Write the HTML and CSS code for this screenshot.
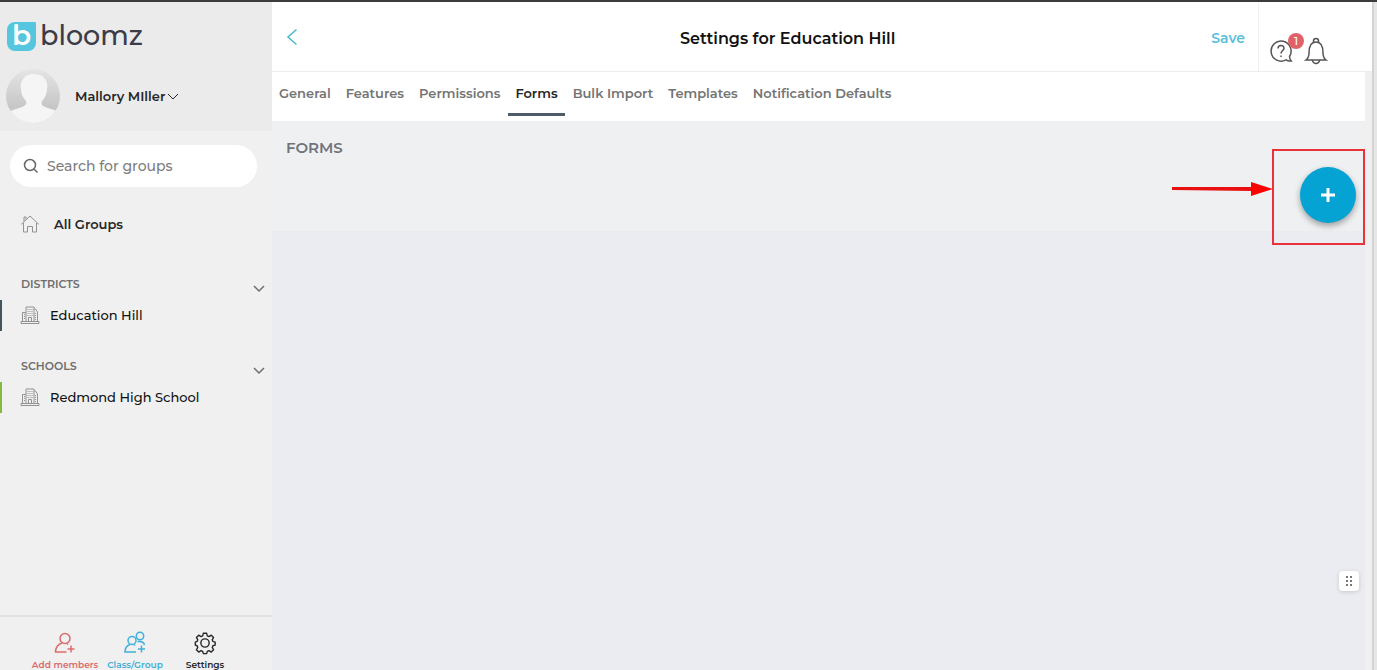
FILE: index.html
```html
<!DOCTYPE html>
<html lang="en">
<head>
  <meta charset="UTF-8" />
  <meta name="viewport" content="width=device-width, initial-scale=1.0"/>
  <title>Settings for Education Hill - Bloomz</title>
  <link rel="stylesheet" href="styles.css">
</head>
<body>

  <!-- shared icons -->
  <svg class="sprite" aria-hidden="true">
    <symbol id="chevron" viewBox="0 0 12 12">
      <path d="M1 4l5 5 5-5"/>
    </symbol>
    <symbol id="building" viewBox="0 0 20 20">
      <path d="M1 16.500h18v2H1zM2.500 16V7.500H6M6 16V2h8v14M14 4h1.500l2 3v9M8.500 16v-3.500h3V16"/>
      <path d="M4 9.500h1M4 11.500h1M4 13.500h1M7.500 4.500h5M7.500 6.500h5M7.500 8.500h5M7.500 10.500h5M15 8.500h1.500M15 10.500h1.500M15 12.500h1.500M15 14.500h1.500" stroke-dasharray="1 1"/>
    </symbol>
  </svg>

  <aside class="sidebar">
    <div class="profile">
      <a class="logo" href="#">
        <span class="logo-mark">b</span>
        <span class="logo-name">bloomz</span>
      </a>
      <div class="user">
        <svg class="avatar" viewBox="0 0 56 56">
          <defs>
            <linearGradient id="avatarBg" x1="0" y1="0" x2="0" y2="1">
              <stop offset="0" stop-color="#e6e6e6"/>
              <stop offset="0.7" stop-color="#c6c6c6"/>
              <stop offset="1" stop-color="#dedede"/>
            </linearGradient>
            <clipPath id="avatarClip"><circle cx="28" cy="28" r="27"/></clipPath>
          </defs>
          <g clip-path="url(#avatarClip)">
            <rect width="56" height="56" fill="url(#avatarBg)"/>
            <path d="M28 6c-4 0-7 1-9 4-3 3-4 7-3 11 0 5 2 9 5 12 1 3-1 5-4 6-5 2-10 3-13 5v14h50V44c-4-2-9-3-14-5-3-1-4-3-3-6 3-3 5-8 5-12 1-4 0-8-3-11-2-3-6-4-11-4z" fill="#f5f5f5"/>
          </g>
        </svg>
        <button class="user-name">Mallory MIller
          <svg class="icon-sm" viewBox="0 0 12 12"><use href="#chevron"/></svg>
        </button>
      </div>
    </div>

    <div class="groups">
      <label class="search">
        <svg viewBox="0 0 16 16"><circle cx="7" cy="7" r="5.500"/><path d="M11 11l3.500 3.500"/></svg>
        <input type="text" placeholder="Search for groups" aria-label="Search for groups">
      </label>

      <a class="all-groups" href="#">
        <svg viewBox="0 0 20 20"><path d="M1 10.500L10 2l9 8.500M4 7.500V3h2v2.500M3.500 9v9h4v-5.500h5V18h4V9"/></svg>
        All Groups
      </a>

      <section class="group">
        <button class="group-title">Districts
          <svg class="icon-sm" viewBox="0 0 12 12"><use href="#chevron"/></svg>
        </button>
        <a class="group-link district" href="#">
          <svg viewBox="0 0 20 20"><use href="#building"/></svg>
          Education Hill
        </a>
      </section>

      <section class="group">
        <button class="group-title">Schools
          <svg class="icon-sm" viewBox="0 0 12 12"><use href="#chevron"/></svg>
        </button>
        <a class="group-link school" href="#">
          <svg viewBox="0 0 20 20"><use href="#building"/></svg>
          Redmond High School
        </a>
      </section>
    </div>

    <footer class="actions">
      <button class="action add">
        <svg viewBox="0 0 24 24"><circle cx="12" cy="7.500" r="5"/><path d="M9 12c-4 1.500-6.500 4.500-6.500 9h11M15 13.500l-1-1M18 14.500v7M14.500 18h7"/></svg>
        Add members
      </button>
      <button class="action class">
        <svg viewBox="0 0 24 24"><circle cx="9" cy="9.500" r="4"/><circle cx="17" cy="5" r="3.700"/><path d="M7 13.500c-3 1-5 4-5 7.500h11M12 14.500l-1-1M14.500 10.500h2c3 0 4.500 1.500 5 3.500M18.500 14.500v7M15 18h7"/></svg>
        Class/Group
      </button>
      <button class="action settings">
        <svg viewBox="-1 -1 26 26"><circle cx="12" cy="12" r="4.500"/><path d="M10.200 1.500h3.600l.7 2.700 1.800.8 2.500-1.500 2.500 2.500-1.500 2.500.8 1.800 2.400.7v3.300l-2.400.7-.8 1.800 1.500 2.500-2.500 2.500-2.500-1.500-1.800.8-.7 2.400h-3.600l-.7-2.400-1.800-.8-2.500 1.500-2.500-2.500 1.500-2.500-.8-1.800L1.500 14.300V11l1.900-.7.8-1.800L2.700 6l2.500-2.500L7.700 5l1.800-.8z" stroke-linejoin="round"/></svg>
        Settings
      </button>
    </footer>
  </aside>

  <main class="main">
    <header class="topbar">
      <button class="back" aria-label="Back">
        <svg viewBox="0 0 12 18"><path d="M10.500 1.500L2 9l8.500 7.500"/></svg>
      </button>
      <h1>Settings for Education Hill</h1>
      <button class="save">Save</button>
      <div class="tools">
        <button class="tool" aria-label="Help">
          <svg viewBox="0 0 24 28"><path d="M20.500 19.500A10 10 0 1 0 17 22.800c1.500 1.200 3.500 1.500 5.300 1.200-1.300-1.200-1.800-2.700-1.800-4.500z"/><path d="M9 11.500c0-4 6-4 6-.3 0 2.300-3 2.300-3 5.300M12 18.500V20"/></svg>
          <span class="badge">1</span>
        </button>
        <button class="tool" aria-label="Notifications">
          <svg viewBox="0 0 24 28"><path d="M9.500 5.500V4a2.500 2.500 0 0 1 5 0v1.500M2 23h20c-2-1.500-3-3.500-3-7 0-6-1-11-7-11S5 10 5 16c0 3.500-1 5.500-3 7zM8.500 23a3.500 3.500 0 0 0 7 0"/></svg>
        </button>
      </div>
    </header>

    <div class="page">
      <nav class="tabs">
        <a href="#">General</a>
        <a href="#">Features</a>
        <a href="#">Permissions</a>
        <a class="active" href="#">Forms</a>
        <a href="#">Bulk Import</a>
        <a href="#">Templates</a>
        <a href="#">Notification Defaults</a>
      </nav>

      <section class="forms-head">
        <h2>Forms</h2>
        <svg class="arrow" viewBox="0 0 102 16">
          <path d="M0 6h79v4L0 9z" fill="#e81010"/>
          <path d="M79 1l22 7-22 7z" fill="#fe0000"/>
        </svg>
        <div class="highlight">
          <button class="fab" aria-label="Add form">
            <svg viewBox="0 0 14 14"><path d="M7 0v14M0 7h14"/></svg>
          </button>
        </div>
      </section>

      <div class="forms-list">
        <button class="grip" aria-label="Open widget">
          <svg viewBox="0 0 8 10"><path d="M1 1h2M5 1h2M1 5h2M5 5h2M1 9h2M5 9h2"/></svg>
        </button>
      </div>
    </div>
  </main>

</body>
</html>
```
FILE: styles.css
```css
* {
  box-sizing: border-box;
}

body {
  font-family: Montserrat, 'Inter', sans-serif;
  font-size: 13px;
  font-weight: 600;
  line-height: 20px;
  color: #262626;
  background: #e6e6e7;
  margin: 0;
  padding-right: 3px;
  height: 100vh;
  display: flex;
  overflow: hidden;
  border-top: 2px solid #3d3b3c;
}

h1, h2 {
  margin: 0;
  font-weight: 600;
}

a {
  color: inherit;
  text-decoration: none;
}

button {
  padding: 0;
  border: none;
  background: none;
  color: inherit;
  font: inherit;
  cursor: pointer;
}

svg {
  display: block;
  flex: none;
  fill: none;
  stroke: currentColor;
}

.sprite {
  position: absolute;
  width: 0;
  height: 0;
}

.icon-sm {
  width: 12px;
  height: 12px;
}

/* sidebar */
.sidebar {
  width: 272px;
  flex: none;
  display: flex;
  flex-direction: column;
  background: #f0f0f0;
}

.profile {
  height: 129px;
  padding: 18px 5px 0;
  background: #ebebeb;
}

.logo {
  display: flex;
  align-items: center;
  gap: 4px;
  height: 32px;
  padding-left: 2px;
}

.logo-mark {
  width: 29px;
  height: 29px;
  border-radius: 8px 1px 8px 8px;
  background: #56c5de;
  color: white;
  font-size: 28px;
  line-height: 27px;
  text-align: center;
}

.logo-name {
  font-size: 27px;
  font-weight: 500;
  line-height: 32px;
  color: #3c3c48;
}

.user {
  display: flex;
  align-items: center;
  gap: 14px;
  margin-top: 16px;
}

.avatar {
  width: 56px;
  height: 56px;
  stroke: none;
}

.user-name {
  display: flex;
  align-items: center;
  gap: 2px;
}

.groups {
  flex: 1;
  padding-top: 14px;
}

.search {
  display: flex;
  align-items: center;
  gap: 8px;
  height: 42px;
  margin: 0 15px 0 10px;
  padding: 0 13px;
  border-radius: 21px;
  background: white;
}

.search svg {
  width: 16px;
  height: 16px;
  color: #666;
  stroke-width: 1.5;
}

.search input {
  flex: 1;
  min-width: 0;
  padding: 0;
  border: none;
  outline: none;
  background: none;
  font: inherit;
  font-size: 14px;
  font-weight: 500;
}

.search input::placeholder {
  color: #7d7d7d;
}

.all-groups {
  display: flex;
  align-items: center;
  gap: 14px;
  margin-top: 27px;
  padding-left: 20px;
}

.all-groups svg, .group-link svg {
  width: 20px;
  height: 20px;
  color: #929292;
}

.group {
  margin-top: 40px;
}

.group + .group {
  margin-top: 25px;
}

.group-title {
  display: flex;
  justify-content: space-between;
  align-items: flex-end;
  width: 100%;
  padding: 0 7px 0 21px;
  font-size: 11px;
  color: #6e6e6e;
  text-transform: uppercase;
}

.group-title svg {
  stroke-width: 1.5;
}

.group-link {
  display: flex;
  align-items: center;
  gap: 10px;
  height: 31px;
  margin-top: 6px;
  padding: 0 0 2px 18px;
  border-left: 2px solid;
  font-weight: 500;
  color: #111;
}

.district {
  border-color: #455560;
}

.school {
  border-color: #83bd3f;
}

.actions {
  display: flex;
  height: 55px;
  padding: 14px 0 0 30px;
  border-top: 2px solid #e2e2e2;
}

.action {
  display: flex;
  flex-direction: column;
  align-items: center;
  width: 70px;
  font-size: 9px;
  line-height: 20px;
  white-space: nowrap;
}

.action svg {
  width: 24px;
  height: 24px;
  stroke-width: 1.5;
}

.add {
  color: #dd6b6b;
}

.class {
  color: #3fb0d8;
}

/* main area */
.main {
  flex: 1;
  min-width: 0;
  display: flex;
  flex-direction: column;
  background: #f0f0f0;
  border-right: 2px solid #d4d4d4;
}

.topbar {
  display: flex;
  height: 70px;
  background: white;
  border-bottom: 1px solid #ececec;
}

.back {
  padding-left: 14px;
  color: #45b9cc;
}

.back svg {
  width: 12px;
  height: 18px;
  stroke-width: 1.5;
}

.topbar h1 {
  flex: 1;
  padding-left: 66px;
  font-size: 16px;
  line-height: 74px;
  text-align: center;
  color: #111;
}

.save {
  padding: 2px 13px 0 0;
  font-size: 14px;
  color: #5bbfdd;
}

.tools {
  display: flex;
  align-items: flex-end;
  gap: 11px;
  width: 114px;
  padding: 0 0 6px 10px;
  border-left: 1px solid #f0f0f0;
  color: #555;
}

.tool {
  position: relative;
}

.tool svg {
  width: 24px;
  height: 28px;
  stroke-width: 1.5;
}

.badge {
  position: absolute;
  top: -4px;
  right: -11px;
  width: 16px;
  height: 16px;
  border-radius: 50%;
  background: #e06268;
  color: white;
  font-size: 11px;
  font-weight: 500;
  line-height: 16px;
}

.page {
  flex: 1;
  display: flex;
  flex-direction: column;
  margin-right: 7px;
}

.tabs {
  display: flex;
  gap: 1px;
  height: 49px;
  background: white;
  color: #747474;
}

.tabs a {
  height: 44px;
  padding: 0 7px;
  line-height: 42px;
}

.tabs .active {
  color: #262626;
  border-bottom: 3px solid #4d5c68;
}

.forms-head {
  position: relative;
  height: 110px;
  padding: 17px 14px;
  background: #eff0f2;
}

.forms-head h2 {
  font-size: 15px;
  color: #70737a;
  text-transform: uppercase;
}

.arrow {
  position: absolute;
  top: 60px;
  right: 91px;
  width: 102px;
  height: 16px;
  stroke: none;
}

.highlight {
  position: absolute;
  top: 28px;
  right: 0;
  width: 93px;
  height: 96px;
  padding: 16px 0 0 26px;
  border: 2px solid #e8323c;
}

.fab {
  display: flex;
  align-items: center;
  justify-content: center;
  width: 56px;
  height: 56px;
  border-radius: 50%;
  background: #05a3d3;
  color: white;
  box-shadow: 0 3px 6px rgba(0,0,0,0.35);
}

.fab svg {
  width: 14px;
  height: 14px;
  stroke-width: 3;
}

.forms-list {
  flex: 1;
  display: flex;
  justify-content: flex-end;
  align-items: flex-end;
  padding: 0 6px 79px;
  background: #ebecf1;
}

.grip {
  display: flex;
  align-items: center;
  justify-content: center;
  width: 20px;
  height: 20px;
  border-radius: 4px;
  background: white;
  color: #777;
  box-shadow: 0 1px 4px rgba(0,0,0,0.15);
}

.grip svg {
  width: 8px;
  height: 10px;
  stroke-width: 2;
}
```
